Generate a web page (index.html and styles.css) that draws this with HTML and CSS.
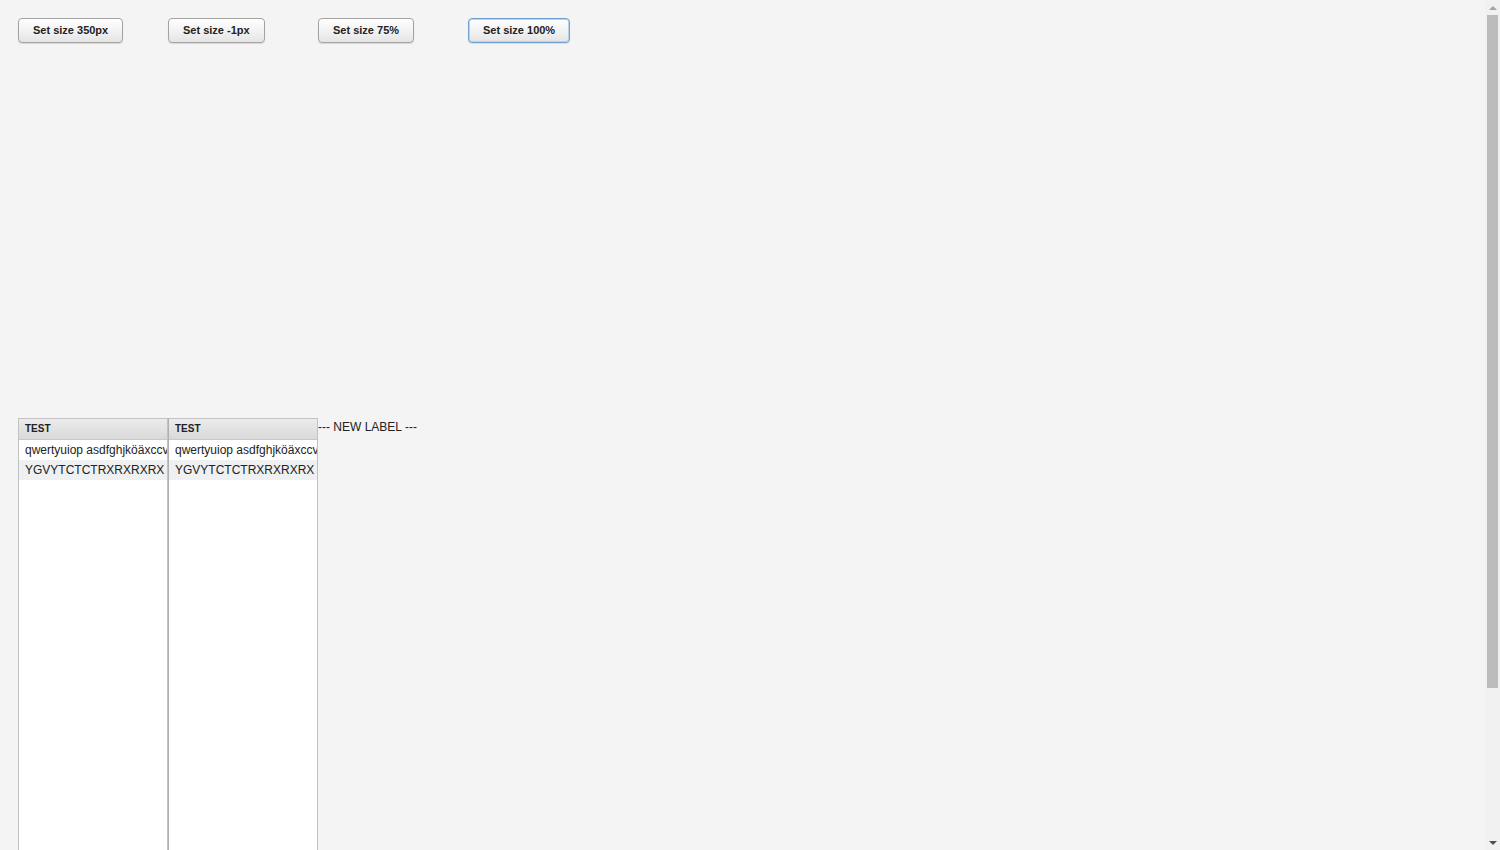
FILE: index.html
```html
<!DOCTYPE html>
<html>
<head>
<meta charset="utf-8">
<link rel="stylesheet" href="styles.css">
</head>
<body>
<div class="page">
  <div class="app">
    <div class="toolbar">
      <div class="cell"><button class="btn">Set size 350px</button></div>
      <div class="cell"><button class="btn">Set size -1px</button></div>
      <div class="cell"><button class="btn">Set size 75%</button></div>
      <div class="cell"><button class="btn focused">Set size 100%</button></div>
    </div>
    <div class="tables">
      <div class="table">
        <div class="thead">TEST</div>
        <div class="row">qwertyuiop asdfghjköäxccvbnm</div>
        <div class="row odd">YGVYTCTCTRXRXRXRX</div>
      </div>
      <div class="table">
        <div class="thead">TEST</div>
        <div class="row">qwertyuiop asdfghjköäxccvbnm</div>
        <div class="row odd">YGVYTCTCTRXRXRXRX</div>
      </div>
      <div class="label">--- NEW LABEL ---</div>
    </div>
  </div>
  <div class="scrollbar">
    <div class="arrow up"></div>
    <div class="track"><div class="thumb"></div></div>
    <div class="arrow down"></div>
  </div>
</div>
</body>
</html>
```

FILE: styles.css
```css
html, body {
  margin: 0;
  padding: 0;
  background: #f4f4f4;
}
body {
  font-family: "Liberation Sans", Arial, sans-serif;
  font-size: 12px;
  color: #222;
}
.page {
  display: flex;
  height: 850px;
  overflow: hidden;
}
.app {
  flex: 1;
  padding: 18px 0 0 18px;
  min-width: 0;
}
.toolbar {
  display: flex;
  height: 400px;
  align-items: flex-start;
}
.cell {
  width: 150px;
}
.btn {
  font-family: "Liberation Sans", Arial, sans-serif;
  font-weight: bold;
  font-size: 11px;
  color: #222;
  height: 25px;
  padding: 0 14px 2px;
  border: 1px solid #a3a3a3;
  border-radius: 4px;
  background: linear-gradient(#ffffff, #f0f0f0 60%, #e4e4e4);
  box-shadow: 0 1px 1px rgba(0,0,0,0.12), inset 0 1px 0 #fff;
  cursor: pointer;
}
.btn.focused {
  border-color: #6f9fd3;
  box-shadow: 0 0 0 1px #b9d3ef inset, 0 1px 1px rgba(0,0,0,0.1);
}
.tables {
  display: flex;
  align-items: flex-start;
}
.table {
  width: 148px;
  height: 640px;
  border: 1px solid #c2c2c2;
  background: #fff;
  overflow: hidden;
}
.table + .table {
  border-left-color: #b0b0b0;
}
.thead {
  height: 20px;
  line-height: 20px;
  padding-left: 6px;
  font-size: 10px;
  font-weight: bold;
  color: #222;
  background: linear-gradient(#ececec, #d9d9d9);
  border-bottom: 1px solid #c9c9c9;
}
.row {
  height: 20px;
  line-height: 20px;
  padding-left: 6px;
  white-space: nowrap;
  overflow: hidden;
  font-size: 12px;
  color: #222;
}
.row.odd {
  background: #eff0f1;
}
.label {
  font-size: 12px;
  line-height: 18px;
  color: #222;
}
.scrollbar {
  width: 15px;
  flex: none;
  display: flex;
  flex-direction: column;
  background: #f1f1f1;
}
.arrow {
  height: 15px;
  flex: none;
  display: flex;
  justify-content: center;
  align-items: center;
}
.arrow::before {
  content: "";
  width: 0;
  height: 0;
  border-left: 4px solid transparent;
  border-right: 4px solid transparent;
}
.arrow.up::before {
  border-bottom: 4px solid #a3a3a3;
}
.arrow.down::before {
  border-top: 4px solid #505050;
}
.track {
  flex: 1;
  padding: 0 2px;
}
.thumb {
  height: 673px;
  background: #bcbcbc;
}
```
